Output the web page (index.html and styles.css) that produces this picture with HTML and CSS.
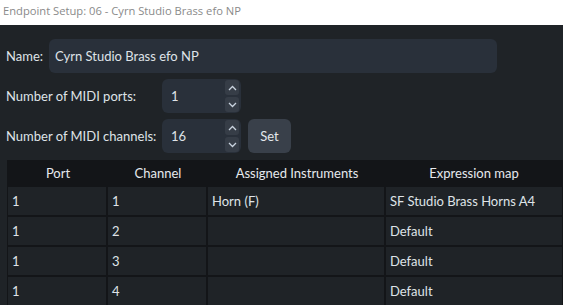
FILE: index.html
```html
<!DOCTYPE html>
<html>
<head>
<meta charset="utf-8">
<link rel="stylesheet" href="styles.css">
</head>
<body>
<div class="titlebar">Endpoint Setup: 06 - Cyrn Studio Brass efo NP</div>
<div class="dialog">
  <div class="form">
    <div class="row">
      <span class="label name-label">Name:</span>
      <div class="textbox">Cyrn Studio Brass efo NP</div>
    </div>
    <div class="row">
      <span class="label num-label">Number of MIDI ports:</span>
      <div class="spin">
        <span class="spin-value">1</span>
        <div class="spin-btns">
          <span class="spin-btn"><svg width="9" height="6" viewBox="0 0 9 6"><path d="M1 5 L4.5 1.5 L8 5" fill="none" stroke="#c9d3df" stroke-width="1.3"/></svg></span>
          <span class="spin-btn"><svg width="9" height="6" viewBox="0 0 9 6"><path d="M1 1 L4.5 4.5 L8 1" fill="none" stroke="#c9d3df" stroke-width="1.3"/></svg></span>
        </div>
      </div>
    </div>
    <div class="row">
      <span class="label num-label">Number of MIDI channels:</span>
      <div class="spin">
        <span class="spin-value">16</span>
        <div class="spin-btns">
          <span class="spin-btn"><svg width="9" height="6" viewBox="0 0 9 6"><path d="M1 5 L4.5 1.5 L8 5" fill="none" stroke="#c9d3df" stroke-width="1.3"/></svg></span>
          <span class="spin-btn"><svg width="9" height="6" viewBox="0 0 9 6"><path d="M1 1 L4.5 4.5 L8 1" fill="none" stroke="#c9d3df" stroke-width="1.3"/></svg></span>
        </div>
      </div>
      <button class="btn">Set</button>
    </div>
  </div>
  <div class="table">
    <div class="thead">
      <div class="th c1">Port</div>
      <div class="th c2">Channel</div>
      <div class="th c3">Assigned Instruments</div>
      <div class="th c4">Expression map</div>
    </div>
    <div class="tr">
      <div class="td c1">1</div>
      <div class="td c2">1</div>
      <div class="td c3">Horn (F)</div>
      <div class="td c4">SF Studio Brass Horns A4</div>
    </div>
    <div class="tr">
      <div class="td c1">1</div>
      <div class="td c2">2</div>
      <div class="td c3"></div>
      <div class="td c4">Default</div>
    </div>
    <div class="tr">
      <div class="td c1">1</div>
      <div class="td c2">3</div>
      <div class="td c3"></div>
      <div class="td c4">Default</div>
    </div>
    <div class="tr">
      <div class="td c1">1</div>
      <div class="td c2">4</div>
      <div class="td c3"></div>
      <div class="td c4">Default</div>
    </div>
  </div>
</div>
</body>
</html>
```
FILE: styles.css
```css
* { box-sizing: border-box; }
html, body { margin: 0; padding: 0; }
body {
  width: 563px;
  height: 305px;
  overflow: hidden;
  background: #1f2327;
  font-family: "Lato", "Open Sans", sans-serif;
  font-size: 13px;
  color: #dfe3e8;
}
.titlebar {
  height: 25px;
  background: #ffffff;
  color: #8a8a8a;
  font-family: "Open Sans", sans-serif;
  font-size: 11.2px;
  line-height: 22px;
  padding-left: 3px;
}
.dialog {
  padding: 14px 0 0 6px;
  width: 563px;
  overflow: hidden;
}
.form {
  display: flex;
  flex-direction: column;
  gap: 6px;
}
.row {
  display: flex;
  align-items: center;
  height: 34px;
}
.label {
  color: #dfe3e8;
  white-space: nowrap;
}
.name-label { width: 43px; }
.num-label { width: 156px; }
.textbox {
  width: 448px;
  height: 34px;
  background: #29303a;
  border-radius: 6px;
  padding-left: 6px;
  line-height: 34px;
}
.spin {
  width: 79px;
  height: 34px;
  background: #29303a;
  border-radius: 6px;
  display: flex;
  align-items: center;
  justify-content: space-between;
  padding: 0 2px 0 9px;
}
.spin-btns {
  display: flex;
  flex-direction: column;
  gap: 2px;
}
.spin-btn {
  width: 14px;
  height: 15px;
  background: #363d47;
  border-radius: 3px;
  display: flex;
  align-items: center;
  justify-content: center;
}
.btn {
  margin-left: 7px;
  width: 43px;
  height: 34px;
  background: #39404a;
  border: none;
  border-radius: 6px;
  color: #e4e8ec;
  font: inherit;
  padding: 0;
}
.table {
  margin-top: 7px;
  margin-left: 1px;
  background: #131518;
  display: flex;
  flex-direction: column;
  gap: 2px;
  padding-left: 1px;
  width: 556px;
}
.thead {
  display: flex;
  height: 26px;
  align-items: center;
  margin-bottom: -1px;
}
.th {
  text-align: center;
  color: #e6e9ed;
}
.tr {
  display: flex;
  gap: 2px;
  height: 28px;
}
.td {
  background: #1f2327;
  line-height: 28px;
  padding-left: 4px;
  white-space: nowrap;
}
.c1 { width: 98px; }
.c2 { width: 98px; }
.c3 { width: 176px; }
.c4 { width: 176px; }
.thead .c1 { width: 100px; }
.thead .c2 { width: 100px; }
.thead .c3 { width: 178px; }
.thead .c4 { width: 176px; }
```
